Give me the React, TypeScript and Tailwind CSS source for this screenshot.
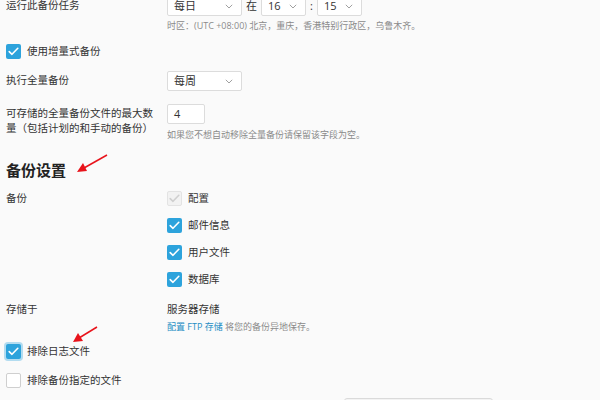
import React from "react";

const font = "font-['Open_Sans','Noto_Sans_CJK_SC',sans-serif]";

function Chevron() {
  return (
    <svg width="8" height="5" viewBox="0 0 8 5" className="shrink-0">
      <path d="M0.8 0.8 L4 4 L7.2 0.8" fill="none" stroke="#a0a0a0" strokeWidth="1" />
    </svg>
  );
}

function Select({ value, width }: { value: string; width: string }) {
  return (
    <div
      className={`${width} h-[20px] flex items-center justify-between pl-[6px] pr-[8px] bg-white border border-[#dcdcdc] rounded-[2px] text-[11px] text-[#333]`}
    >
      <span>{value}</span>
      <Chevron />
    </div>
  );
}

function Check({ state, focus }: { state: "on" | "off" | "disabled"; focus?: boolean }) {
  if (state === "off") {
    return <div className="w-[15px] h-[15px] shrink-0 bg-white border border-[#cfcfcf] rounded-[2px]" />;
  }
  const disabled = state === "disabled";
  return (
    <div
      className={`w-[15px] h-[15px] shrink-0 rounded-[2px] flex items-center justify-center ${
        disabled ? "bg-[#f2f2f2] border border-[#e3e3e3]" : "bg-[#2da3dc]"
      } ${focus ? "shadow-[0_0_0_2px_rgba(45,163,220,0.35)]" : ""}`}
    >
      <svg width="11" height="9" viewBox="0 0 11 9">
        <path
          d="M1.2 4.6 L4 7.3 L9.8 1.3"
          fill="none"
          stroke={disabled ? "#cfcfcf" : "#ffffff"}
          strokeWidth="1.6"
          strokeLinecap="round"
          strokeLinejoin="round"
        />
      </svg>
    </div>
  );
}

function CheckRow({ label, state, focus }: { label: string; state: "on" | "off" | "disabled"; focus?: boolean }) {
  return (
    <div className="flex items-center gap-[6px] h-[15px]">
      <Check state={state} focus={focus} />
      <span className="text-[10.5px] text-[#333] leading-[15px]">{label}</span>
    </div>
  );
}

export default function App() {
  return (
    <div className={`relative w-[600px] h-[400px] overflow-hidden bg-[#fafafa] px-[6px] ${font}`}>
      {/* schedule */}
      <div className="-mt-[4px] grid grid-cols-[161px_1fr] items-center">
        <span className="text-[10.5px] text-[#333]">运行此备份任务</span>
        <div className="flex items-center gap-[3px]">
          <Select value="每日" width="w-[75px]" />
          <span className="text-[11px] text-[#333] px-[1px]">在</span>
          <Select value="16" width="w-[45px]" />
          <span className="text-[11px] text-[#333] px-[1px]">:</span>
          <Select value="15" width="w-[45px]" />
        </div>
      </div>
      <div className="grid grid-cols-[161px_1fr] mt-[3px]">
        <span />
        <p className="text-[9px] leading-[13px] text-[#8a8a8a]">
          时区：(UTC +08:00) 北京，重庆，香港特别行政区，乌鲁木齐。
        </p>
      </div>

      <div className="mt-[12px]">
        <CheckRow label="使用增量式备份" state="on" />
      </div>

      <div className="mt-[12px] grid grid-cols-[161px_1fr] items-center">
        <span className="text-[10.5px] text-[#333]">执行全量备份</span>
        <Select value="每周" width="w-[75px]" />
      </div>

      <div className="mt-[13px] grid grid-cols-[161px_1fr] items-start">
        <p className="text-[10.5px] leading-[15px] text-[#333] mt-[2px] pr-[4px]">
          可存储的全量备份文件的最大数量（包括计划的和手动的备份）
        </p>
        <div>
          <div className="w-[38px] h-[20px] bg-white border border-[#dcdcdc] rounded-[2px] pl-[6px] flex items-center text-[11px] text-[#333]">
            4
          </div>
          <p className="mt-[4px] text-[9px] leading-[13px] text-[#8a8a8a]">
            如果您不想自动移除全量备份请保留该字段为空。
          </p>
        </div>
      </div>

      <h2 className="mt-[19px] text-[15px] leading-[20px] font-bold text-[#222]">备份设置</h2>

      <div className="mt-[11px] grid grid-cols-[161px_1fr] items-start">
        <span className="text-[10.5px] leading-[15px] text-[#333]">备份</span>
        <div className="flex flex-col gap-[12px]">
          <CheckRow label="配置" state="disabled" />
          <CheckRow label="邮件信息" state="on" />
          <CheckRow label="用户文件" state="on" />
          <CheckRow label="数据库" state="on" />
        </div>
      </div>

      <div className="mt-[15px] grid grid-cols-[161px_1fr] items-start">
        <span className="text-[10.5px] leading-[15px] text-[#333]">存储于</span>
        <div>
          <p className="text-[10.5px] leading-[15px] text-[#333]">服务器存储</p>
          <p className="mt-[2px] text-[9px] leading-[15px] text-[#8a8a8a]">
            <span className="text-[#1f8dc4]">配置 FTP 存储</span> 将您的备份异地保存。
          </p>
        </div>
      </div>

      <div className="mt-[10px] flex flex-col gap-[14px]">
        <CheckRow label="排除日志文件" state="on" focus />
        <CheckRow label="排除备份指定的文件" state="off" />
      </div>

      <div className="absolute left-[344px] top-[398px] w-[149px] h-[20px] rounded-[3px] bg-[#f3f3f3] border border-[#dadada]" />

      {/* annotation arrows */}
      <svg className="absolute left-0 top-0 pointer-events-none" width="600" height="400">
        <line x1="107" y1="155" x2="84" y2="168" stroke="#e8131b" strokeWidth="1.5" />
        <polygon points="77,172 83,163 87,171" fill="#e8131b" />
        <line x1="97" y1="327" x2="79" y2="338" stroke="#e8131b" strokeWidth="1.5" />
        <polygon points="73,342 78,333 83,341" fill="#e8131b" />
      </svg>
    </div>
  );
}
